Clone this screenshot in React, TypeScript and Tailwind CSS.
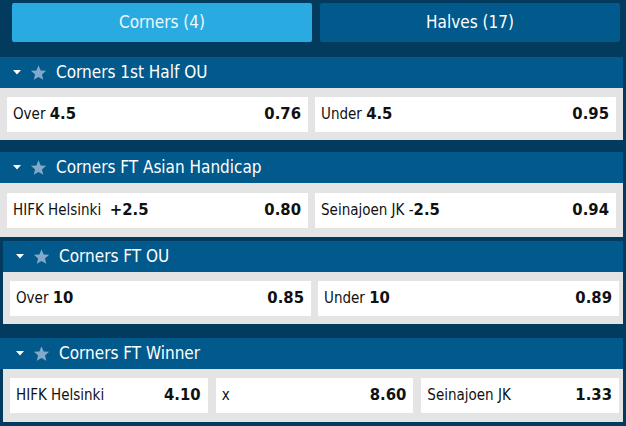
type Pick = { label: string; line?: string; sign?: string; odds: string };

type Market = {
  title: string;
  picks: Pick[];
};

const MARKETS: Market[] = [
  {
    title: "Corners 1st Half OU",
    picks: [
      { label: "Over", line: "4.5", odds: "0.76" },
      { label: "Under", line: "4.5", odds: "0.95" },
    ],
  },
  {
    title: "Corners FT Asian Handicap",
    picks: [
      { label: "HIFK Helsinki ", line: "+2.5", odds: "0.80" },
      { label: "Seinajoen JK", sign: "-", line: "2.5", odds: "0.94" },
    ],
  },
  {
    title: "Corners FT OU",
    picks: [
      { label: "Over", line: "10", odds: "0.85" },
      { label: "Under", line: "10", odds: "0.89" },
    ],
  },
  {
    title: "Corners FT Winner",
    picks: [
      { label: "HIFK Helsinki", odds: "4.10" },
      { label: "x", odds: "8.60" },
      { label: "Seinajoen JK", odds: "1.33" },
    ],
  },
];

function Caret() {
  return (
    <svg width="8" height="5" viewBox="0 0 8 5" className="shrink-0">
      <path d="M0 0h8L4 4.5z" fill="#ffffff" />
    </svg>
  );
}

function Star() {
  return (
    <svg width="17" height="16" viewBox="0 0 24 23" className="shrink-0">
      <path
        d="M12 0.5l3.1 7.3 7.9 0.6-6 5.2 1.9 7.7L12 17.2l-6.8 4.1 1.9-7.7-6-5.2 7.9-0.6z"
        fill="#80a9ca"
      />
    </svg>
  );
}

function Header({ title, pad }: { title: string; pad: string }) {
  return (
    <div className={`h-[31px] bg-[#02598b] flex items-center ${pad}`}>
      <Caret />
      <span className="ml-[9px]">
        <Star />
      </span>
      <span className="ml-[9px] text-[17px] text-white leading-none">{title}</span>
    </div>
  );
}

function Cell({ pick }: { pick: Pick }) {
  return (
    <div className="h-[35px] bg-white flex items-center justify-between px-[6px] text-[15px] text-[#111]">
      <span className="whitespace-pre">
        {pick.label}
        {pick.line && (
          <>
            {" "}
            {pick.sign}
            <b className="font-bold text-[16.5px]">{pick.line}</b>
          </>
        )}
      </span>
      <b className="font-bold text-[16.5px] mr-[1px]">{pick.odds}</b>
    </div>
  );
}

export default function App() {
  return (
    <div
      className="w-[626px] h-[426px] bg-[#023b5d] overflow-hidden"
      style={{ fontFamily: '"DejaVu Sans Condensed", "DejaVu Sans", sans-serif' }}
    >
      {/* tabs */}
      <div className="flex gap-[8px] pl-[12px] pt-[3px]">
        <div className="w-[300px] h-[39px] rounded-[2px] bg-[#29abe2] text-[#eef8fd] text-[17px] flex items-center justify-center">
          Corners (4)
        </div>
        <div className="w-[300px] h-[39px] rounded-[2px] bg-[#02598b] text-white text-[17px] flex items-center justify-center">
          Halves (17)
        </div>
      </div>

      {/* 1st half OU */}
      <div className="w-[623px] mt-[15px]">
        <Header title={MARKETS[0].title} pad="pl-[13px]" />
        <div className="bg-[#e4e4e4] px-[7px] pt-[9px] pb-[8px] grid grid-cols-2 gap-[7px]">
          {MARKETS[0].picks.map((p) => (
            <Cell key={p.label} pick={p} />
          ))}
        </div>
      </div>

      {/* Asian handicap */}
      <div className="w-[623px] mt-[12px]">
        <Header title={MARKETS[1].title} pad="pl-[13px]" />
        <div className="bg-[#e4e4e4] px-[7px] pt-[10px] pb-[9px] grid grid-cols-2 gap-[7px]">
          {MARKETS[1].picks.map((p) => (
            <Cell key={p.label} pick={p} />
          ))}
        </div>
      </div>

      {/* FT OU, nudged */}
      <div className="w-[620px] ml-[3px] mt-[4px]">
        <Header title={MARKETS[2].title} pad="pl-[13px]" />
        <div className="bg-[#e4e4e4] pl-[7px] pr-[4px] pt-[9px] pb-[8px] grid grid-cols-2 gap-[7px]">
          {MARKETS[2].picks.map((p) => (
            <Cell key={p.label} pick={p} />
          ))}
        </div>
      </div>

      {/* FT winner */}
      <div className="w-[623px] mt-[14px]">
        <Header title={MARKETS[3].title} pad="pl-[16px]" />
        <div className="border-l-[3px] border-[#023b5d] bg-[#e4e4e4] pl-[7px] pr-[4px] pt-[9px] pb-[9px] grid grid-cols-3 gap-[8px]">
          {MARKETS[3].picks.map((p) => (
            <Cell key={p.label} pick={p} />
          ))}
        </div>
      </div>
    </div>
  );
}
